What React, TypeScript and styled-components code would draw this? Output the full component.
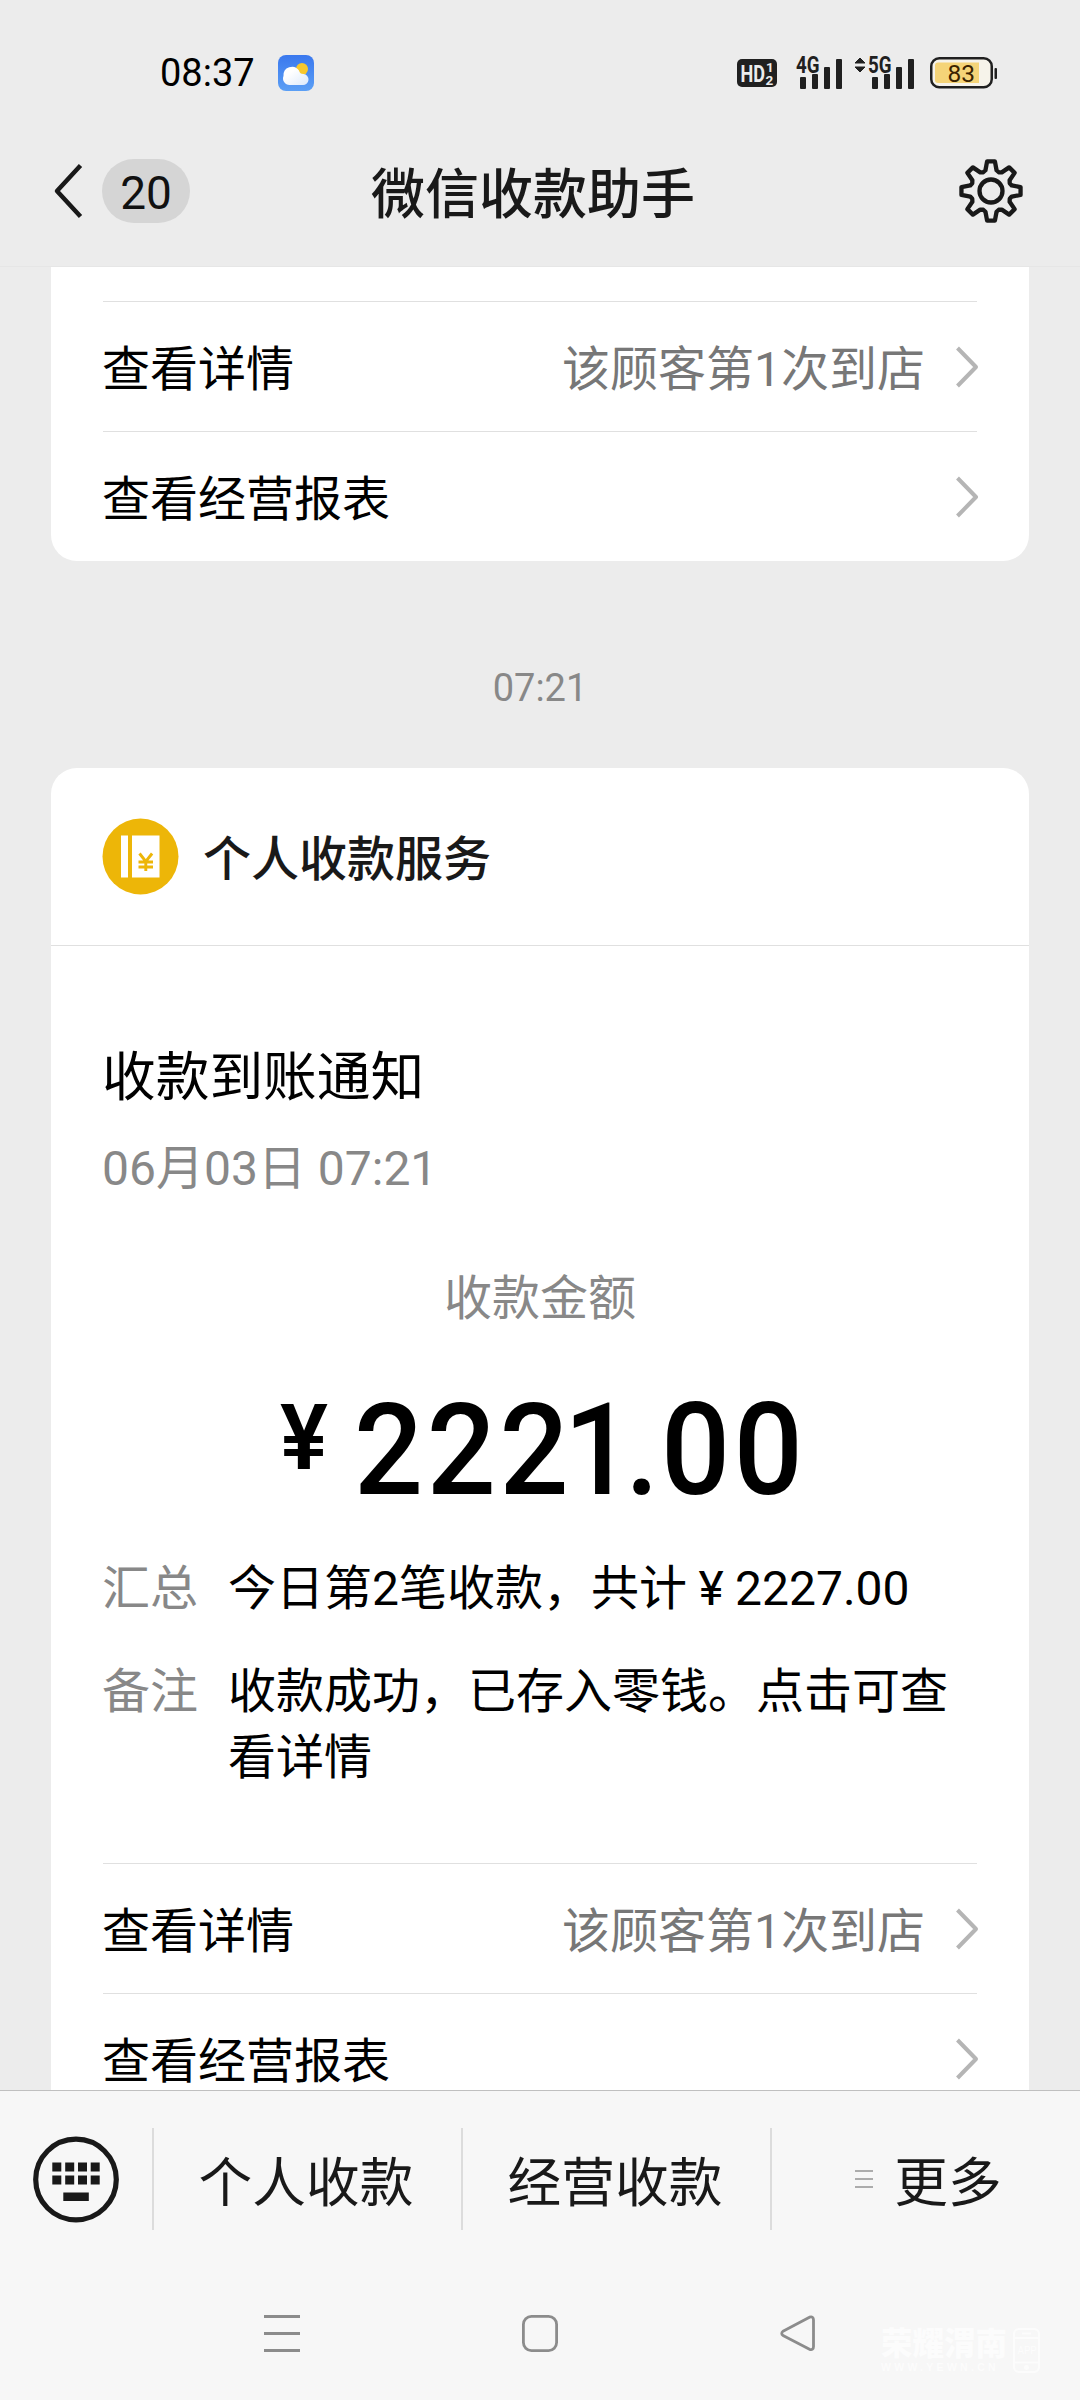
import React from "react";
import styled, { createGlobalStyle } from "styled-components";

const GlobalStyle = createGlobalStyle`
  *, *::before, *::after { box-sizing: border-box; }
  body {
    margin: 0;
    background: #ececec;
    font-family: Roboto, "Noto Sans CJK SC", sans-serif;
  }
  svg { display: block; flex: none; overflow: visible; }
`;

const Screen = styled.div`
  width: 1080px;
  height: 2400px;
  overflow: hidden;
  display: flex;
  flex-direction: column;
  background: #ececec;
  color: #000;
`;

const StatusBar = styled.div`
  height: 145px;
  flex: none;
  display: flex;
  align-items: center;
  padding: 0 82px 0 160px;
`;

const Clock = styled.span`
  font-size: 38px;
  line-height: 44px;
  width: 118px;
`;

const StatusIcons = styled.div`
  margin-left: auto;
  display: flex;
  align-items: center;
`;

const Header = styled.header`
  height: 121px;
  flex: none;
  display: grid;
  grid-template-columns: 300px 1fr 300px;
  align-items: center;
  padding-bottom: 29px;
  color: #191919;
`;

const BackGroup = styled.div`
  display: flex;
  align-items: center;
  gap: 19px;
  padding-left: 51px;
`;

const Unread = styled.span`
  width: 88px;
  height: 64px;
  border-radius: 32px;
  background: #d5d5d5;
  color: #111;
  font-size: 46px;
  line-height: 68px;
  text-align: center;
`;

const Title = styled.h1`
  margin: 0 0 0 -14px;
  padding-top: 9px;
  font-size: 54px;
  line-height: 64px;
  font-weight: 500;
  text-align: center;
`;

const GearSlot = styled.div`
  display: flex;
  justify-content: flex-end;
  padding-right: 56px;
`;

const Feed = styled.main`
  flex: 1;
  min-height: 0;
  overflow: hidden;
  border-top: 1px solid #e6e6e6;
  padding: 0 51px;
`;

const Card = styled.section<{ $tail?: boolean }>`
  background: #fff;
  border-radius: ${(p) => (p.$tail ? "0 0 26px 26px" : "26px")};
  padding-top: ${(p) => (p.$tail ? "34px" : "0")};
`;

const Row = styled.div`
  height: 130px;
  margin: 0 52px;
  border-top: 1px solid #e0e0e0;
  display: flex;
  align-items: center;
  font-size: 48px;
  line-height: 60px;
  padding-top: 6px;
`;

const RowLabel = styled.span`
  margin-left: -1px;
`;

const RowNote = styled.span`
  margin-left: auto;
  color: #777;
`;

const RowArrow = styled.span<{ $alone?: boolean }>`
  margin: 0 -3px 5px ${(p) => (p.$alone ? "auto" : "29px")};
`;

const TimeStamp = styled.div`
  height: 207px;
  padding-top: 105px;
  text-align: center;
  font-size: 38px;
  line-height: 44px;
  color: #888;
`;

const Service = styled.div`
  height: 178px;
  display: flex;
  align-items: center;
  gap: 24px;
  padding-left: 51px;
  border-bottom: 1px solid #e0e0e0;
  font-size: 48px;
  line-height: 60px;
  font-weight: 500;
  color: #191919;
`;

const ServiceName = styled.span`
  padding-top: 6px;
`;

const Notice = styled.div`
  height: 917px;
  padding: 96px 51px 0;
  display: flex;
  flex-direction: column;
`;

const NoticeTitle = styled.h2`
  margin: 0;
  font-size: 53.7px;
  line-height: 72px;
  font-weight: 400;
`;

const NoticeDate = styled.div`
  margin-top: 25px;
  font-size: 48px;
  line-height: 60px;
  color: #888;
`;

const AmountLabel = styled.div`
  margin: 70px 0 0 0;
  font-size: 48px;
  line-height: 60px;
  color: #888;
  text-align: center;
`;

const Amount = styled.div`
  margin-top: 46px;
  height: 150px;
  display: flex;
  padding-left: 178px;
  font-weight: 500;
  font-size: 128px;
  line-height: 150px;
`;

const Yen = styled.span`
  width: 74px;
  font-size: 90px;
  line-height: 128px;
  font-weight: 600;
`;

const Digits = styled.span`
  display: inline-block;
  letter-spacing: 3.8px;
  transform: scaleX(0.95);
  transform-origin: left center;
`;

const Kern = styled.span<{ $by: number }>`
  letter-spacing: ${(p) => p.$by}px;
`;

const Detail = styled.dl`
  margin: 0;
  padding-top: 31px;
  display: grid;
  grid-template-columns: 126px 1fr;
  row-gap: 37px;
  font-size: 48px;
  line-height: 66px;
`;

const Term = styled.dt`
  color: #888;
`;

const Value = styled.dd`
  margin: 0;
  width: 726px;
`;

const InlineYen = styled.span`
  display: inline-block;
  width: 48px;
  text-align: center;
`;

const MenuBar = styled.nav`
  height: 177px;
  flex: none;
  display: flex;
  align-items: center;
  background: #f7f7f7;
  border-top: 1px solid #c0c0c0;
  color: #191919;
`;

const KeyboardSlot = styled.div`
  width: 152px;
  padding-left: 33px;
`;

const MenuItem = styled.div<{ $shift: number }>`
  width: 309px;
  height: 102px;
  border-left: 2px solid #dcdcdc;
  display: flex;
  align-items: center;
  justify-content: center;
  gap: 21px;
  padding-left: ${(p) => Math.max(p.$shift, 0)}px;
  padding-right: ${(p) => Math.max(-p.$shift, 0)}px;
  font-size: 53.7px;
  line-height: 72px;
`;

const MenuText = styled.span`
  padding-top: 10px;
`;

const SystemNav = styled.div`
  height: 133px;
  flex: none;
  background: #f7f7f7;
  display: flex;
  align-items: center;
  padding: 0 0 0 264px;
`;

const NavSlot = styled.div<{ $w: number }>`
  width: ${(p) => p.$w}px;
`;

const Watermark = styled.div`
  display: flex;
  gap: 5px;
  padding-top: 33px;
  color: #fcfcfc;
`;

const WatermarkText = styled.div`
  width: 127px;
  font-weight: 900;
`;

const WatermarkName = styled.div`
  font-size: 31.5px;
  line-height: 34px;
`;

const WatermarkSite = styled.div`
  font-family: "Liberation Sans", sans-serif;
  font-size: 10.5px;
  line-height: 11px;
  letter-spacing: 3.3px;
  white-space: nowrap;
`;

const WeatherIcon = () => (
  <svg width="36" height="36" viewBox="0 0 36 36">
    <defs>
      <linearGradient id="sky" x1="0" y1="0" x2="0" y2="1">
        <stop offset="0" stopColor="#3a78ee" />
        <stop offset="1" stopColor="#5b9ff5" />
      </linearGradient>
      <linearGradient id="cloud" x1="0" y1="0" x2="1" y2="1">
        <stop offset="0.3" stopColor="#fff" />
        <stop offset="1" stopColor="#dbe9fb" />
      </linearGradient>
    </defs>
    <rect width="36" height="36" rx="8" fill="url(#sky)" />
    <circle cx="24" cy="14" r="6" fill="#f7c82e" />
    <path d="M11.500 30a6.500 6.500 0 0 1-6-9a8.500 8.500 0 0 1 15.500-5.500a4.500 4.500 0 0 0 4.500 3.500a5.500 5.500 0 0 1-1 11z" fill="url(#cloud)" />
  </svg>
);

const HdIcon = () => (
  <svg width="40" height="28" viewBox="0 0 40 28">
    <rect width="40" height="28" rx="5" fill="#202020" />
    <g fill="#ececec" fontFamily="Roboto, sans-serif" fontWeight="700">
      <text x="3.500" y="22.500" fontSize="23" textLength="24.500" lengthAdjust="spacingAndGlyphs">HD</text>
      <text x="29" y="13" fontSize="13.500">1</text>
      <text x="28.500" y="25.500" fontSize="13.500">2</text>
    </g>
  </svg>
);

const Signal = ({ label, arrows }: { label: string; arrows?: boolean }) => {
  const dx = arrows ? 18 : 4;
  return (
    <svg width={arrows ? 61 : 47} height="34" viewBox={arrows ? "0 0 61 34" : "0 0 47 34"} fill="#202020">
      {arrows && <path d="M6 2l5 5H1zM6 16l5-5H1z" stroke="#202020" strokeLinejoin="round" />}
      <text x={dx - 4} y="17" fontSize="23" fontFamily="Roboto, sans-serif" fontWeight="700" textLength="23.500" lengthAdjust="spacingAndGlyphs">
        {label}
      </text>
      <rect x={dx} y="21" width="6" height="12" rx="1" />
      <rect x={dx + 12} y="18" width="6" height="15" rx="1" />
      <rect x={dx + 24} y="11" width="6" height="22" rx="1" />
      <rect x={dx + 36} y="3" width="6" height="30" rx="1" />
    </svg>
  );
};

const Battery = () => (
  <svg width="68" height="32" viewBox="0 0 68 32">
    <rect x="1.250" y="1.250" width="60.500" height="29" rx="8" fill="#f6f3ea" stroke="#202020" strokeWidth="2.500" />
    <path d="M8 5.500h41v20.500H8a3 3 0 0 1-3-3V8.500a3 3 0 0 1 3-3z" fill="#f5d478" />
    <rect x="64.500" y="11" width="2.500" height="11" rx="1" fill="#202020" />
    <text x="17.500" y="24.500" fontSize="24.500" fontFamily="Roboto, sans-serif" fill="#3a2200">83</text>
  </svg>
);

const BackIcon = () => (
  <svg width="32" height="60" viewBox="0 0 32 60" fill="none" stroke="#191919" strokeWidth="4.500" strokeLinejoin="round">
    <path d="M29.500 4.500L6 30l23.500 25.500" />
  </svg>
);

const teeth = 8;
const gearPath = (() => {
  const at = (r: number, deg: number) => {
    const a = ((deg - 90) * Math.PI) / 180;
    return `${(33 + r * Math.cos(a)).toFixed(2)} ${(33 + r * Math.sin(a)).toFixed(2)}`;
  };
  let d = "";
  for (let i = 0; i < teeth; i++) {
    const c = i * 45;
    d += `${i ? "L" : "M"}${at(21.5, c - 15)}L${at(29.8, c - 7.5)}L${at(29.8, c + 7.5)}L${at(21.5, c + 15)}L${at(20.3, c + 22.5)}`;
  }
  return d + "Z";
})();

const GearIcon = () => (
  <svg width="66" height="66" viewBox="0 0 66 66" fill="none" stroke="#191919" strokeWidth="4.300" strokeLinejoin="round">
    <path d={gearPath} />
    <circle cx="33" cy="33" r="11.500" />
  </svg>
);

const Chevron = () => (
  <svg width="26" height="44" viewBox="0 0 26 44" fill="none" stroke="#b5b5b5" strokeWidth="4" strokeLinejoin="round">
    <path d="M3.500 3L22 22L3.500 41" />
  </svg>
);

const ServiceIcon = () => (
  <svg width="77" height="77" viewBox="0 0 77 77">
    <circle cx="38.500" cy="38.500" r="38" fill="#edb608" />
    <rect x="19" y="17.500" width="7" height="42" fill="#fff" />
    <rect x="30" y="17.500" width="27.500" height="42" fill="#fff" />
    <path d="M37.500 35.500l6.300 8l6.300-8M36.500 44h14.500M36.500 49h14.500M43.800 43v10" fill="none" stroke="#edb608" strokeWidth="2.900" />
  </svg>
);

const KeyboardIcon = () => (
  <svg width="87" height="87" viewBox="0 0 87 87" fill="#191919">
    <circle cx="43" cy="43.500" r="40.300" fill="none" stroke="#191919" strokeWidth="5.200" />
    {[26.5, 39.5].map((y) => [19.3, 32.2, 45, 57.7].map((x) => <rect key={`${x}-${y}`} x={x} y={y} width="9" height="9" />))}
    <rect x="30.300" y="56.500" width="25.500" height="8.500" />
  </svg>
);

const MenuLines = () => (
  <svg width="18" height="20" viewBox="0 0 18 20" fill="#acacac">
    <rect y="1" width="18" height="2" />
    <rect y="9" width="18" height="2" />
    <rect y="17" width="18" height="2" />
  </svg>
);

const RecentsIcon = () => (
  <svg width="36" height="37" viewBox="0 0 36 37" fill="#8c8c8c">
    <rect width="36" height="3" />
    <rect y="17" width="36" height="3" />
    <rect y="34" width="36" height="3" />
  </svg>
);

const HomeIcon = () => (
  <svg width="36" height="37" viewBox="0 0 36 37" fill="none" stroke="#8c8c8c" strokeWidth="2.800">
    <rect x="1.400" y="1.400" width="33.200" height="34.200" rx="8" />
  </svg>
);

const BackNavIcon = () => (
  <svg width="36" height="37" viewBox="0 0 36 37" fill="none" stroke="#8c8c8c" strokeWidth="2.800" strokeLinejoin="round">
    <path d="M3 16.300L29.500 2.200Q33.500 1 33.500 5V31.500Q33.500 35.500 29.500 34.300L3 20.500Q0.500 18.400 3 16.300Z" />
  </svg>
);

const PhoneMark = () => (
  <svg width="27" height="45" viewBox="0 0 27 45" fill="none" stroke="#fcfcfc" strokeWidth="2">
    <rect x="1" y="1" width="25" height="43" rx="5" />
    <path d="M1 10h25M1 34.500h25M9 5.500h9" />
    <circle cx="13.500" cy="39.500" r="1.500" fill="#fcfcfc" />
    <text x="4.500" y="26" fontSize="10" fontFamily="Roboto, sans-serif" fill="#fcfcfc" stroke="none">APP</text>
  </svg>
);

const ActionRows = () => (
  <>
    <Row>
      <RowLabel>查看详情</RowLabel>
      <RowNote>该顾客第1次到店</RowNote>
      <RowArrow><Chevron /></RowArrow>
    </Row>
    <Row>
      <RowLabel>查看经营报表</RowLabel>
      <RowArrow $alone><Chevron /></RowArrow>
    </Row>
  </>
);

const StatusGap = styled.span<{ $w: number }>`
  width: ${(p) => p.$w}px;
`;

export default function App() {
  return (
    <Screen>
      <GlobalStyle />
      <StatusBar>
        <Clock>08:37</Clock>
        <WeatherIcon />
        <StatusIcons>
          <HdIcon />
          <StatusGap $w={19} />
          <Signal label="4G" />
          <StatusGap $w={11} />
          <Signal label="5G" arrows />
          <StatusGap $w={15} />
          <Battery />
        </StatusIcons>
      </StatusBar>
      <Header>
        <BackGroup>
          <BackIcon />
          <Unread>20</Unread>
        </BackGroup>
        <Title>微信收款助手</Title>
        <GearSlot><GearIcon /></GearSlot>
      </Header>
      <Feed>
        <Card $tail>
          <ActionRows />
        </Card>
        <TimeStamp>07:21</TimeStamp>
        <Card>
          <Service>
            <ServiceIcon />
            <ServiceName>个人收款服务</ServiceName>
          </Service>
          <Notice>
            <NoticeTitle>收款到账通知</NoticeTitle>
            <NoticeDate>06月03日 07:21</NoticeDate>
            <AmountLabel>收款金额</AmountLabel>
            <Amount>
              <Yen>¥</Yen>
              <Digits>
                22<Kern $by={-5}>2</Kern><Kern $by={-8}>1</Kern><Kern $by={2}>.</Kern>00
              </Digits>
            </Amount>
            <Detail>
              <Term>汇总</Term>
              <Value>今日第2笔收款，共计<InlineYen>¥</InlineYen>2227.00</Value>
              <Term>备注</Term>
              <Value>收款成功，已存入零钱。点击可查看详情</Value>
            </Detail>
          </Notice>
          <ActionRows />
        </Card>
      </Feed>
      <MenuBar>
        <KeyboardSlot><KeyboardIcon /></KeyboardSlot>
        <MenuItem $shift={-3}><MenuText>个人收款</MenuText></MenuItem>
        <MenuItem $shift={-3}><MenuText>经营收款</MenuText></MenuItem>
        <MenuItem $shift={6}>
          <MenuLines />
          <MenuText>更多</MenuText>
        </MenuItem>
      </MenuBar>
      <SystemNav>
        <NavSlot $w={258}><RecentsIcon /></NavSlot>
        <NavSlot $w={258}><HomeIcon /></NavSlot>
        <NavSlot $w={101}><BackNavIcon /></NavSlot>
        <Watermark>
          <WatermarkText>
            <WatermarkName>荣耀渭南</WatermarkName>
            <WatermarkSite>WWW.YEWN.CN</WatermarkSite>
          </WatermarkText>
          <PhoneMark />
        </Watermark>
      </SystemNav>
    </Screen>
  );
}
